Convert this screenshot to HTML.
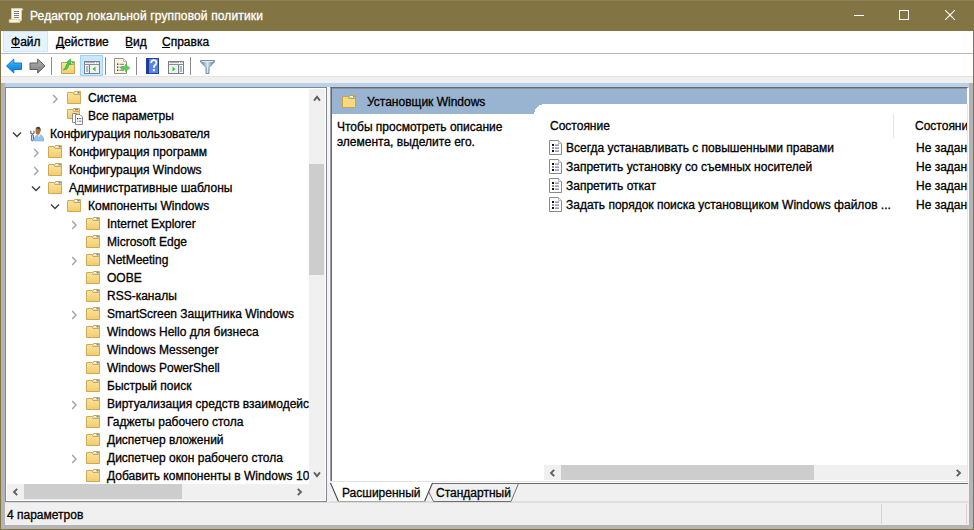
<!DOCTYPE html>
<html><head><meta charset="utf-8">
<style>
*{margin:0;padding:0;box-sizing:border-box}
html,body{width:974px;height:530px;overflow:hidden;background:#b4b4b4}
body{position:relative;font-family:"Liberation Sans",sans-serif;font-size:12px;color:#000}
.a{position:absolute;display:block}
.t{position:absolute;white-space:nowrap;line-height:14px;-webkit-text-stroke-width:0.3px}
u{text-decoration:none}
.clip{position:absolute;overflow:hidden}
</style></head><body>
<svg width="0" height="0" style="position:absolute"><defs><linearGradient id="fg" x1="0" y1="0" x2="0" y2="1"><stop offset="0" stop-color="#fbe4a0"/><stop offset="1" stop-color="#f2cc6c"/></linearGradient></defs></svg>
<!-- window frame -->
<div class="a" style="left:0;top:0;width:974px;height:530px;background:#837444"></div>
<div class="a" style="left:1px;top:31px;width:972px;height:498px;background:#b4b4b4"></div>
<!-- title bar -->
<div class="a" style="left:0;top:0;width:974px;height:1px;background:#8f8157"></div>
<svg class="a" style="left:8px;top:7px" width="16" height="17" viewBox="0 0 16 17"><path d="M3.5 1.5 H14 L15 2.5 L13.5 3.5 V13.5 H3.5 Z" fill="#fbf6df" stroke="#d8d2b8" stroke-width="0.8"/><rect x="6" y="4" width="5" height="1" fill="#7b7b9a"/><rect x="6" y="6" width="5" height="1" fill="#7b7b9a"/><rect x="6" y="8" width="5" height="1" fill="#7b7b9a"/><rect x="6" y="10" width="5" height="1" fill="#7b7b9a"/><path d="M1.5 12.5 H12 V15.5 H1.5 Q0.5 14 1.5 12.5Z" fill="#f6eab8" stroke="#d8cfa6" stroke-width="0.8"/><rect x="2" y="13.5" width="8" height="1" fill="#fff"/></svg>
<div class="t" style="left:30px;top:9px;color:#fff;font-size:12px;letter-spacing:0.14px">Редактор локальной групповой политики</div>
<div class="a" style="left:854px;top:15px;width:10px;height:1px;background:#fff"></div>
<div class="a" style="left:899px;top:10px;width:10px;height:10px;border:1px solid #fff"></div>
<svg class="a" style="left:945px;top:10px" width="10" height="10" viewBox="0 0 10 10"><path d="M0 0 L10 10 M10 0 L0 10" stroke="#fff" stroke-width="1.1"/></svg>
<!-- menu bar -->
<div class="a" style="left:1px;top:31px;width:972px;height:22px;background:#fff"></div>
<div class="a" style="left:1px;top:53px;width:972px;height:1px;background:#b9b9b9"></div>
<div class="a" style="left:3px;top:31px;width:45px;height:21px;background:#e5f3ff;border:1px solid #cce8ff"></div>
<div class="t" style="left:11px;top:35px"><u>Ф</u>айл</div>
<div class="t" style="left:56px;top:35px"><u>Д</u>ействие</div>
<div class="t" style="left:125px;top:35px"><u>В</u>ид</div>
<div class="t" style="left:162px;top:35px"><u>С</u>правка</div>
<div class="a" style="left:11px;top:47px;width:9px;height:1px;background:#000"></div>
<div class="a" style="left:56px;top:47px;width:9px;height:1px;background:#000"></div>
<div class="a" style="left:126px;top:47px;width:7px;height:1px;background:#000"></div>
<div class="a" style="left:162px;top:47px;width:8px;height:1px;background:#000"></div>
<!-- toolbar -->
<div class="a" style="left:1px;top:54px;width:972px;height:22px;background:#fff"></div>
<div class="a" style="left:1px;top:76px;width:972px;height:1px;background:#e3e3e3"></div>
<div class="a" style="left:1px;top:77px;width:972px;height:6px;background:#f0f0f0"></div>
<div class="a" style="left:80px;top:55px;width:23px;height:21px;background:#cce8ff;border:1px solid #99d1ff"></div>
<!-- back -->
<svg class="a" style="left:6px;top:58px" width="17" height="16" viewBox="0 0 17 16"><defs><linearGradient id="gb" x1="0" y1="0" x2="0" y2="1"><stop offset="0" stop-color="#5cc8ff"/><stop offset="0.5" stop-color="#1a9be8"/><stop offset="1" stop-color="#0a6fd0"/></linearGradient></defs><path d="M0.5 8 L7.8 1 V5 H15.5 V11.5 H7.8 V15 Z" fill="url(#gb)" stroke="#1f72c6" stroke-width="1"/></svg>
<!-- forward -->
<svg class="a" style="left:29px;top:58px" width="17" height="16" viewBox="0 0 17 16"><defs><linearGradient id="gg" x1="0" y1="0" x2="0" y2="1"><stop offset="0" stop-color="#b5b5b5"/><stop offset="1" stop-color="#7c7c7c"/></linearGradient></defs><path d="M16 8 L8.7 1 V5 H1 V11.5 H8.7 V15 Z" fill="url(#gg)" stroke="#5e5e5e" stroke-width="1"/></svg>
<div class="a" style="left:51px;top:57px;width:1px;height:18px;background:#8c8c8c"></div>
<!-- folder up -->
<svg class="a" style="left:61px;top:58px" width="16" height="17" viewBox="0 0 16 17"><path d="M7 5.5 L8 3.5 H13.5 V6.5" fill="#f5d784" stroke="#d0a853"/><rect x="9" y="4" width="2.5" height="1.2" fill="#fff"/><rect x="11" y="4" width="2" height="1.2" fill="#3b8de0"/><path d="M0.5 15.5 V5 Q0.5 4.5 1 4.5 H6 L7 6.5 H13.5 V15.5 Z" fill="url(#fg)" stroke="#c9a24c"/><path d="M2.3 11.8 Q4.5 10.5 5 8 Q5.3 6 6.6 5.4 L5.3 4.4 L9.6 1 L10 6.6 L8.6 5.9 Q7.6 6.6 7.3 8.8 Q6.6 12 2.3 11.8Z" fill="#45d045" stroke="#2aa52a" stroke-width="0.6"/></svg>
<!-- show/hide tree -->
<svg class="a" style="left:84px;top:61px" width="16" height="13" viewBox="0 0 16 13"><rect x="0.5" y="0.5" width="15" height="12" fill="#fff" stroke="#7a7f87"/><rect x="1.5" y="1.2" width="9.5" height="1" fill="#9a9ea5"/><rect x="12" y="1.2" width="1" height="1" fill="#9a9ea5"/><rect x="13.6" y="1.2" width="1" height="1" fill="#9a9ea5"/><rect x="1" y="3" width="14" height="1" fill="#8a8f96"/><rect x="4.8" y="4" width="1.2" height="8.5" fill="#7a7f87"/><rect x="6" y="4" width="9" height="8" fill="#f1f1f1"/><rect x="2" y="5.5" width="2" height="1" fill="#3a78c8"/><rect x="2" y="7.5" width="2" height="1" fill="#3a78c8"/><rect x="2" y="9.5" width="2" height="1" fill="#3a78c8"/><path d="M8.5 8 L11.5 5.5 V10.5 Z" fill="#3cc23c"/></svg>
<div class="a" style="left:105px;top:57px;width:1px;height:18px;background:#8c8c8c"></div>
<!-- export list -->
<svg class="a" style="left:114px;top:58px" width="17" height="16" viewBox="0 0 17 16"><path d="M0.5 0.5 H9.5 L12.5 3.5 V15.5 H0.5 Z" fill="#fbf5dc" stroke="#8f8f8f"/><path d="M9.5 0.5 V3.5 H12.5" fill="#fff" stroke="#aaa" stroke-width="0.8"/><rect x="3" y="5.5" width="1.3" height="1.3" fill="#222"/><rect x="5.5" y="5.8" width="4.5" height="0.9" fill="#6a6aa0"/><rect x="3" y="8.5" width="1.3" height="1.3" fill="#222"/><rect x="5.5" y="8.8" width="4.5" height="0.9" fill="#6a6aa0"/><rect x="3" y="11.5" width="1.3" height="1.3" fill="#222"/><rect x="5.5" y="11.8" width="4.5" height="0.9" fill="#6a6aa0"/><path d="M7.3 8.7 H11.3 V6.4 L15.8 10 L11.3 13.6 V11.3 H7.3 Z" fill="#52d452" stroke="#33b033" stroke-width="0.6"/></svg>
<div class="a" style="left:136px;top:57px;width:1px;height:18px;background:#8c8c8c"></div>
<!-- help -->
<svg class="a" style="left:146px;top:58px" width="13" height="16" viewBox="0 0 13 16"><rect x="0" y="0" width="13" height="16" fill="#2343a8"/><rect x="3" y="1" width="9" height="14" fill="#5d84dd"/><rect x="0.5" y="0.5" width="2.5" height="15" fill="#1c3a98"/><path d="M5.2 5 Q5.2 2.2 7.8 2.2 Q10.4 2.2 10.4 4.8 Q10.4 6.3 8.9 7.3 Q7.9 8 7.9 9.8" fill="none" stroke="#fff" stroke-width="1.7"/><rect x="6.9" y="11.2" width="2" height="2" fill="#fff"/></svg>
<!-- show/hide action -->
<svg class="a" style="left:168px;top:61px" width="16" height="13" viewBox="0 0 16 13"><rect x="0.5" y="0.5" width="15" height="12" fill="#fff" stroke="#7a7f87"/><rect x="1.5" y="1.2" width="9.5" height="1" fill="#9a9ea5"/><rect x="12" y="1.2" width="1" height="1" fill="#9a9ea5"/><rect x="13.6" y="1.2" width="1" height="1" fill="#9a9ea5"/><rect x="1" y="3" width="14" height="1" fill="#8a8f96"/><rect x="10" y="4" width="1.2" height="8.5" fill="#7a7f87"/><rect x="1" y="4" width="9" height="8" fill="#f1f1f1"/><rect x="12" y="5.5" width="2" height="1" fill="#3a78c8"/><rect x="12" y="7.5" width="2" height="1" fill="#3a78c8"/><rect x="12" y="9.5" width="2" height="1" fill="#3a78c8"/><path d="M7.5 8 L4.5 5.5 V10.5 Z" fill="#3cc23c"/></svg>
<div class="a" style="left:190px;top:57px;width:1px;height:18px;background:#8c8c8c"></div>
<!-- filter -->
<svg class="a" style="left:200px;top:60px" width="15" height="14" viewBox="0 0 15 14"><defs><linearGradient id="gf" x1="0" y1="0" x2="1" y2="0"><stop offset="0" stop-color="#5e7a90"/><stop offset="0.5" stop-color="#d6e6f2"/><stop offset="1" stop-color="#5a6f80"/></linearGradient></defs><path d="M0.5 0.5 H14.5 V1.8 L9 7.5 V13.5 H6 V7.5 L0.5 1.8 Z" fill="url(#gf)" stroke="#6c8294" stroke-width="0.9"/><rect x="1.5" y="1" width="12" height="0.9" fill="#e8f2fa"/></svg>
<!-- light blue strip -->
<div class="a" style="left:5px;top:83px;width:964px;height:4px;background:#b9d1ea"></div>
<!-- tree panel -->
<div class="a" style="left:5px;top:87px;width:322px;height:415px;background:#fff;border:1px solid #828790"></div>
<div class="clip" style="left:7px;top:89px;width:302px;height:395px">
<div class="a" style="left:-7px;top:-89px;width:974px;height:530px">
<svg class="a" style="left:52px;top:94px" width="7" height="10" viewBox="0 0 7 10"><path d="M1.2 1 L5 5 L1.2 9" fill="none" stroke="#a6a6a6" stroke-width="1.5"/></svg>
<svg class="a" style="left:67px;top:89px" width="16" height="16" viewBox="0 0 16 16"><path d="M6.5 4.5 L7.5 2.5 H13.5 V5.5" fill="#f5d784" stroke="#d0a853"/><rect x="8" y="3" width="3.5" height="1.3" fill="#fff"/><rect x="10.5" y="3" width="2" height="1.3" fill="#3b8de0"/><path d="M0.5 14.5 V4 Q0.5 3.5 1 3.5 H6 L7 5.5 H13.5 V14.5 Z" fill="url(#fg)" stroke="#d0a853"/></svg>
<div class="t" style="left:88px;top:91px">Система</div>
<svg class="a" style="left:67px;top:108px" width="17" height="17" viewBox="0 0 17 17"><path d="M5.5 2.5 L6.5 0.5 H12.5 V3.5" fill="#f5d784" stroke="#d0a853"/><rect x="8" y="1" width="3" height="1.2" fill="#3b8de0"/><path d="M0.5 10.5 V2 Q0.5 1.5 1 1.5 H5.5 L6.5 3.5 H12.5 V10.5 Z" fill="url(#fg)" stroke="#d0a853"/><path d="M5.5 5.5 H10 L11.5 7 V14.5 H5.5 Z" fill="#fff" stroke="#8c8c8c"/><path d="M8.5 6.5 H13 L15.5 9 V16.5 H8.5 Z" fill="#fff" stroke="#8c8c8c"/><rect x="10" y="10" width="1.3" height="1.3" fill="#222"/><rect x="12" y="10.2" width="2.5" height="0.9" fill="#5a5a8a"/><rect x="10" y="12.7" width="1.3" height="1" fill="#7a7aa0"/><rect x="12" y="12.7" width="2.5" height="0.9" fill="#5a5a8a"/></svg>
<div class="t" style="left:88px;top:109px">Все параметры</div>
<svg class="a" style="left:12px;top:131px" width="10" height="7" viewBox="0 0 10 7"><path d="M1 1.5 L5 5.5 L9 1.5" fill="none" stroke="#404040" stroke-width="1.5"/></svg>
<svg class="a" style="left:29px;top:126px" width="16" height="16" viewBox="0 0 16 16"><path d="M5.2 15 Q4.8 10.3 8 8.8 L9.8 10 L11.8 8.8 Q15 10.3 14.8 15 Z" fill="#94c4ee" stroke="#79a9d6" stroke-width="0.6"/><path d="M8.6 9.5 L9.8 11 L11 9.5Z" fill="#fff"/><ellipse cx="8.9" cy="5" rx="2.4" ry="3.7" fill="#b36d34"/><path d="M6.6 3.2 Q7.3 0.6 9.6 0.8 Q12.2 1.2 11.6 5.8 Q11.2 3 9.2 2.6 Q7.6 2.5 6.6 3.2Z" fill="#3a3a3a"/><path d="M1.8 4.8 V7 L3.4 8.3 L5 7 V4.8" fill="none" stroke="#6d6d6d" stroke-width="1.2"/><rect x="2.4" y="8.8" width="2" height="6" rx="1" fill="#cfe4f6" stroke="#2a57b0" stroke-width="0.9"/></svg>
<div class="t" style="left:50px;top:127px">Конфигурация пользователя</div>
<svg class="a" style="left:33px;top:148px" width="7" height="10" viewBox="0 0 7 10"><path d="M1.2 1 L5 5 L1.2 9" fill="none" stroke="#a6a6a6" stroke-width="1.5"/></svg>
<svg class="a" style="left:48px;top:143px" width="16" height="16" viewBox="0 0 16 16"><path d="M6.5 4.5 L7.5 2.5 H13.5 V5.5" fill="#f5d784" stroke="#d0a853"/><rect x="8" y="3" width="3.5" height="1.3" fill="#fff"/><rect x="10.5" y="3" width="2" height="1.3" fill="#3b8de0"/><path d="M0.5 14.5 V4 Q0.5 3.5 1 3.5 H6 L7 5.5 H13.5 V14.5 Z" fill="url(#fg)" stroke="#d0a853"/></svg>
<div class="t" style="left:69px;top:145px">Конфигурация программ</div>
<svg class="a" style="left:33px;top:166px" width="7" height="10" viewBox="0 0 7 10"><path d="M1.2 1 L5 5 L1.2 9" fill="none" stroke="#a6a6a6" stroke-width="1.5"/></svg>
<svg class="a" style="left:48px;top:161px" width="16" height="16" viewBox="0 0 16 16"><path d="M6.5 4.5 L7.5 2.5 H13.5 V5.5" fill="#f5d784" stroke="#d0a853"/><rect x="8" y="3" width="3.5" height="1.3" fill="#fff"/><rect x="10.5" y="3" width="2" height="1.3" fill="#3b8de0"/><path d="M0.5 14.5 V4 Q0.5 3.5 1 3.5 H6 L7 5.5 H13.5 V14.5 Z" fill="url(#fg)" stroke="#d0a853"/></svg>
<div class="t" style="left:69px;top:163px">Конфигурация Windows</div>
<svg class="a" style="left:31px;top:185px" width="10" height="7" viewBox="0 0 10 7"><path d="M1 1.5 L5 5.5 L9 1.5" fill="none" stroke="#404040" stroke-width="1.5"/></svg>
<svg class="a" style="left:48px;top:179px" width="16" height="16" viewBox="0 0 16 16"><path d="M6.5 4.5 L7.5 2.5 H13.5 V5.5" fill="#f5d784" stroke="#d0a853"/><rect x="8" y="3" width="3.5" height="1.3" fill="#fff"/><rect x="10.5" y="3" width="2" height="1.3" fill="#3b8de0"/><path d="M0.5 14.5 V4 Q0.5 3.5 1 3.5 H6 L7 5.5 H13.5 V14.5 Z" fill="url(#fg)" stroke="#d0a853"/></svg>
<div class="t" style="left:69px;top:181px">Административные шаблоны</div>
<svg class="a" style="left:50px;top:203px" width="10" height="7" viewBox="0 0 10 7"><path d="M1 1.5 L5 5.5 L9 1.5" fill="none" stroke="#404040" stroke-width="1.5"/></svg>
<svg class="a" style="left:67px;top:197px" width="16" height="16" viewBox="0 0 16 16"><path d="M6.5 4.5 L7.5 2.5 H13.5 V5.5" fill="#f5d784" stroke="#d0a853"/><rect x="8" y="3" width="3.5" height="1.3" fill="#fff"/><rect x="10.5" y="3" width="2" height="1.3" fill="#3b8de0"/><path d="M0.5 14.5 V4 Q0.5 3.5 1 3.5 H6 L7 5.5 H13.5 V14.5 Z" fill="url(#fg)" stroke="#d0a853"/></svg>
<div class="t" style="left:88px;top:199px">Компоненты Windows</div>
<svg class="a" style="left:71px;top:220px" width="7" height="10" viewBox="0 0 7 10"><path d="M1.2 1 L5 5 L1.2 9" fill="none" stroke="#a6a6a6" stroke-width="1.5"/></svg>
<svg class="a" style="left:86px;top:215px" width="16" height="16" viewBox="0 0 16 16"><path d="M6.5 4.5 L7.5 2.5 H13.5 V5.5" fill="#f5d784" stroke="#d0a853"/><rect x="8" y="3" width="3.5" height="1.3" fill="#fff"/><rect x="10.5" y="3" width="2" height="1.3" fill="#3b8de0"/><path d="M0.5 14.5 V4 Q0.5 3.5 1 3.5 H6 L7 5.5 H13.5 V14.5 Z" fill="url(#fg)" stroke="#d0a853"/></svg>
<div class="t" style="left:107px;top:217px">Internet Explorer</div>
<svg class="a" style="left:86px;top:233px" width="16" height="16" viewBox="0 0 16 16"><path d="M6.5 4.5 L7.5 2.5 H13.5 V5.5" fill="#f5d784" stroke="#d0a853"/><rect x="8" y="3" width="3.5" height="1.3" fill="#fff"/><rect x="10.5" y="3" width="2" height="1.3" fill="#3b8de0"/><path d="M0.5 14.5 V4 Q0.5 3.5 1 3.5 H6 L7 5.5 H13.5 V14.5 Z" fill="url(#fg)" stroke="#d0a853"/></svg>
<div class="t" style="left:107px;top:235px">Microsoft Edge</div>
<svg class="a" style="left:71px;top:256px" width="7" height="10" viewBox="0 0 7 10"><path d="M1.2 1 L5 5 L1.2 9" fill="none" stroke="#a6a6a6" stroke-width="1.5"/></svg>
<svg class="a" style="left:86px;top:251px" width="16" height="16" viewBox="0 0 16 16"><path d="M6.5 4.5 L7.5 2.5 H13.5 V5.5" fill="#f5d784" stroke="#d0a853"/><rect x="8" y="3" width="3.5" height="1.3" fill="#fff"/><rect x="10.5" y="3" width="2" height="1.3" fill="#3b8de0"/><path d="M0.5 14.5 V4 Q0.5 3.5 1 3.5 H6 L7 5.5 H13.5 V14.5 Z" fill="url(#fg)" stroke="#d0a853"/></svg>
<div class="t" style="left:107px;top:253px">NetMeeting</div>
<svg class="a" style="left:86px;top:269px" width="16" height="16" viewBox="0 0 16 16"><path d="M6.5 4.5 L7.5 2.5 H13.5 V5.5" fill="#f5d784" stroke="#d0a853"/><rect x="8" y="3" width="3.5" height="1.3" fill="#fff"/><rect x="10.5" y="3" width="2" height="1.3" fill="#3b8de0"/><path d="M0.5 14.5 V4 Q0.5 3.5 1 3.5 H6 L7 5.5 H13.5 V14.5 Z" fill="url(#fg)" stroke="#d0a853"/></svg>
<div class="t" style="left:107px;top:271px">OOBE</div>
<svg class="a" style="left:86px;top:287px" width="16" height="16" viewBox="0 0 16 16"><path d="M6.5 4.5 L7.5 2.5 H13.5 V5.5" fill="#f5d784" stroke="#d0a853"/><rect x="8" y="3" width="3.5" height="1.3" fill="#fff"/><rect x="10.5" y="3" width="2" height="1.3" fill="#3b8de0"/><path d="M0.5 14.5 V4 Q0.5 3.5 1 3.5 H6 L7 5.5 H13.5 V14.5 Z" fill="url(#fg)" stroke="#d0a853"/></svg>
<div class="t" style="left:107px;top:289px">RSS-каналы</div>
<svg class="a" style="left:71px;top:310px" width="7" height="10" viewBox="0 0 7 10"><path d="M1.2 1 L5 5 L1.2 9" fill="none" stroke="#a6a6a6" stroke-width="1.5"/></svg>
<svg class="a" style="left:86px;top:305px" width="16" height="16" viewBox="0 0 16 16"><path d="M6.5 4.5 L7.5 2.5 H13.5 V5.5" fill="#f5d784" stroke="#d0a853"/><rect x="8" y="3" width="3.5" height="1.3" fill="#fff"/><rect x="10.5" y="3" width="2" height="1.3" fill="#3b8de0"/><path d="M0.5 14.5 V4 Q0.5 3.5 1 3.5 H6 L7 5.5 H13.5 V14.5 Z" fill="url(#fg)" stroke="#d0a853"/></svg>
<div class="t" style="left:107px;top:307px">SmartScreen Защитника Windows</div>
<svg class="a" style="left:86px;top:323px" width="16" height="16" viewBox="0 0 16 16"><path d="M6.5 4.5 L7.5 2.5 H13.5 V5.5" fill="#f5d784" stroke="#d0a853"/><rect x="8" y="3" width="3.5" height="1.3" fill="#fff"/><rect x="10.5" y="3" width="2" height="1.3" fill="#3b8de0"/><path d="M0.5 14.5 V4 Q0.5 3.5 1 3.5 H6 L7 5.5 H13.5 V14.5 Z" fill="url(#fg)" stroke="#d0a853"/></svg>
<div class="t" style="left:107px;top:325px">Windows Hello для бизнеса</div>
<svg class="a" style="left:86px;top:341px" width="16" height="16" viewBox="0 0 16 16"><path d="M6.5 4.5 L7.5 2.5 H13.5 V5.5" fill="#f5d784" stroke="#d0a853"/><rect x="8" y="3" width="3.5" height="1.3" fill="#fff"/><rect x="10.5" y="3" width="2" height="1.3" fill="#3b8de0"/><path d="M0.5 14.5 V4 Q0.5 3.5 1 3.5 H6 L7 5.5 H13.5 V14.5 Z" fill="url(#fg)" stroke="#d0a853"/></svg>
<div class="t" style="left:107px;top:343px">Windows Messenger</div>
<svg class="a" style="left:86px;top:359px" width="16" height="16" viewBox="0 0 16 16"><path d="M6.5 4.5 L7.5 2.5 H13.5 V5.5" fill="#f5d784" stroke="#d0a853"/><rect x="8" y="3" width="3.5" height="1.3" fill="#fff"/><rect x="10.5" y="3" width="2" height="1.3" fill="#3b8de0"/><path d="M0.5 14.5 V4 Q0.5 3.5 1 3.5 H6 L7 5.5 H13.5 V14.5 Z" fill="url(#fg)" stroke="#d0a853"/></svg>
<div class="t" style="left:107px;top:361px">Windows PowerShell</div>
<svg class="a" style="left:86px;top:377px" width="16" height="16" viewBox="0 0 16 16"><path d="M6.5 4.5 L7.5 2.5 H13.5 V5.5" fill="#f5d784" stroke="#d0a853"/><rect x="8" y="3" width="3.5" height="1.3" fill="#fff"/><rect x="10.5" y="3" width="2" height="1.3" fill="#3b8de0"/><path d="M0.5 14.5 V4 Q0.5 3.5 1 3.5 H6 L7 5.5 H13.5 V14.5 Z" fill="url(#fg)" stroke="#d0a853"/></svg>
<div class="t" style="left:107px;top:379px">Быстрый поиск</div>
<svg class="a" style="left:71px;top:400px" width="7" height="10" viewBox="0 0 7 10"><path d="M1.2 1 L5 5 L1.2 9" fill="none" stroke="#a6a6a6" stroke-width="1.5"/></svg>
<svg class="a" style="left:86px;top:395px" width="16" height="16" viewBox="0 0 16 16"><path d="M6.5 4.5 L7.5 2.5 H13.5 V5.5" fill="#f5d784" stroke="#d0a853"/><rect x="8" y="3" width="3.5" height="1.3" fill="#fff"/><rect x="10.5" y="3" width="2" height="1.3" fill="#3b8de0"/><path d="M0.5 14.5 V4 Q0.5 3.5 1 3.5 H6 L7 5.5 H13.5 V14.5 Z" fill="url(#fg)" stroke="#d0a853"/></svg>
<div class="t" style="left:107px;top:397px">Виртуализация средств взаимодействия с приложениями</div>
<svg class="a" style="left:86px;top:413px" width="16" height="16" viewBox="0 0 16 16"><path d="M6.5 4.5 L7.5 2.5 H13.5 V5.5" fill="#f5d784" stroke="#d0a853"/><rect x="8" y="3" width="3.5" height="1.3" fill="#fff"/><rect x="10.5" y="3" width="2" height="1.3" fill="#3b8de0"/><path d="M0.5 14.5 V4 Q0.5 3.5 1 3.5 H6 L7 5.5 H13.5 V14.5 Z" fill="url(#fg)" stroke="#d0a853"/></svg>
<div class="t" style="left:107px;top:415px">Гаджеты рабочего стола</div>
<svg class="a" style="left:86px;top:431px" width="16" height="16" viewBox="0 0 16 16"><path d="M6.5 4.5 L7.5 2.5 H13.5 V5.5" fill="#f5d784" stroke="#d0a853"/><rect x="8" y="3" width="3.5" height="1.3" fill="#fff"/><rect x="10.5" y="3" width="2" height="1.3" fill="#3b8de0"/><path d="M0.5 14.5 V4 Q0.5 3.5 1 3.5 H6 L7 5.5 H13.5 V14.5 Z" fill="url(#fg)" stroke="#d0a853"/></svg>
<div class="t" style="left:107px;top:433px">Диспетчер вложений</div>
<svg class="a" style="left:71px;top:454px" width="7" height="10" viewBox="0 0 7 10"><path d="M1.2 1 L5 5 L1.2 9" fill="none" stroke="#a6a6a6" stroke-width="1.5"/></svg>
<svg class="a" style="left:86px;top:449px" width="16" height="16" viewBox="0 0 16 16"><path d="M6.5 4.5 L7.5 2.5 H13.5 V5.5" fill="#f5d784" stroke="#d0a853"/><rect x="8" y="3" width="3.5" height="1.3" fill="#fff"/><rect x="10.5" y="3" width="2" height="1.3" fill="#3b8de0"/><path d="M0.5 14.5 V4 Q0.5 3.5 1 3.5 H6 L7 5.5 H13.5 V14.5 Z" fill="url(#fg)" stroke="#d0a853"/></svg>
<div class="t" style="left:107px;top:451px">Диспетчер окон рабочего стола</div>
<svg class="a" style="left:86px;top:467px" width="16" height="16" viewBox="0 0 16 16"><path d="M6.5 4.5 L7.5 2.5 H13.5 V5.5" fill="#f5d784" stroke="#d0a853"/><rect x="8" y="3" width="3.5" height="1.3" fill="#fff"/><rect x="10.5" y="3" width="2" height="1.3" fill="#3b8de0"/><path d="M0.5 14.5 V4 Q0.5 3.5 1 3.5 H6 L7 5.5 H13.5 V14.5 Z" fill="url(#fg)" stroke="#d0a853"/></svg>
<div class="t" style="left:107px;top:469px">Добавить компоненты в Windows 10</div>
</div></div>
<!-- tree vscroll -->
<div class="a" style="left:309px;top:89px;width:16px;height:395px;background:#f0f0f0"></div>
<div class="a" style="left:309px;top:164px;width:15px;height:111px;background:#cdcdcd"></div>
<svg class="a" style="left:313px;top:95px" width="8" height="7" viewBox="0 0 8 7"><path d="M1 5.6 L4 1.8 L7 5.6" fill="none" stroke="#606060" stroke-width="1.9"/></svg>
<svg class="a" style="left:313px;top:471px" width="8" height="7" viewBox="0 0 8 7"><path d="M1 1.4 L4 5.2 L7 1.4" fill="none" stroke="#606060" stroke-width="1.9"/></svg>
<!-- tree hscroll -->
<div class="a" style="left:7px;top:484px;width:318px;height:16px;background:#f0f0f0"></div>
<div class="a" style="left:24px;top:484px;width:158px;height:15px;background:#cdcdcd"></div>
<svg class="a" style="left:12px;top:488px" width="6" height="8" viewBox="0 0 6 8"><path d="M5.2 0.8 L2 4 L5.2 7.2" fill="none" stroke="#606060" stroke-width="1.9"/></svg>
<svg class="a" style="left:297px;top:488px" width="6" height="8" viewBox="0 0 6 8"><path d="M0.8 0.8 L4 4 L0.8 7.2" fill="none" stroke="#606060" stroke-width="1.9"/></svg>
<!-- splitter -->
<div class="a" style="left:327px;top:87px;width:3px;height:415px;background:#f5f5f5"></div>
<!-- detail panel -->
<div class="a" style="left:330px;top:87px;width:639px;height:394px;background:#fff;border-left:1px solid #a0a0a0;border-top:1px solid #696969;border-right:2px solid #fff"></div>
<div class="a" style="left:331px;top:87px;width:1px;height:394px;background:#696969"></div>
<div class="a" style="left:332px;top:88px;width:635px;height:16px;background:#99b4d1"></div>
<div class="a" style="left:332px;top:88px;width:635px;height:1px;background:#8a929c"></div>
<div class="a" style="left:332px;top:104px;width:210px;height:10px;background:#99b4d1"></div>
<svg class="a" style="left:534px;top:104px" width="16" height="10" viewBox="0 0 16 10" shape-rendering="crispEdges"><path d="M0 10 V8 H1 V5 L5 1 H8 V0 H16 V10 Z" fill="#fff"/></svg>
<svg class="a" style="left:342px;top:93px" width="16" height="16" viewBox="0 0 16 16"><path d="M6.5 4.5 L7.5 2.5 H13.5 V5.5" fill="#f2cf73" stroke="#c9a24c"/><rect x="8" y="3" width="4" height="1.3" fill="#fff"/><rect x="11" y="3" width="1.5" height="1.3" fill="#3b8de0"/><path d="M0.5 14.5 V4 Q0.5 3.5 1 3.5 H6 L7 5.5 H13.5 V14.5 Z" fill="#f7d982" stroke="#c9a24c"/></svg>
<div class="t" style="left:367px;top:95px">Установщик Windows</div>
<div class="t" style="left:337px;top:120px;line-height:15px">Чтобы просмотреть описание<br>элемента, выделите его.</div>
<!-- list header -->
<div class="t" style="left:550px;top:119px">Состояние</div>
<div class="a" style="left:893px;top:114px;width:1px;height:24px;background:#e5e5e5"></div>
<div class="clip" style="left:900px;top:110px;width:67px;height:120px"><div class="t" style="left:15px;top:9px">Состояние</div></div>
<div class="clip" style="left:540px;top:130px;width:427px;height:100px"><div class="a" style="left:-540px;top:-130px;width:974px;height:530px">
<svg class="a" style="left:549px;top:140px" width="14" height="16" viewBox="0 0 14 16"><path d="M0.5 0.5 H9.5 L12.5 3.5 V14.5 H0.5 Z" fill="#fff" stroke="#8a8a8a"/><path d="M9.5 0.5 V3.5 H12.5" fill="#eee" stroke="#aaa" stroke-width="0.8"/><rect x="3" y="4" width="2" height="2" fill="#111"/><rect x="6" y="4.6" width="4" height="1" fill="#5b5b8c"/><rect x="3" y="7" width="2" height="2" fill="#8c8cb0"/><rect x="6" y="7.6" width="4" height="1" fill="#5b5b8c"/><rect x="3" y="10" width="2" height="2" fill="#111"/><rect x="6" y="10.6" width="4" height="1" fill="#5b5b8c"/></svg>
<div class="t" style="left:566px;top:141px">Всегда устанавливать с повышенными правами</div>
<div class="t" style="left:916px;top:141px">Не задана</div>
<svg class="a" style="left:549px;top:159px" width="14" height="16" viewBox="0 0 14 16"><path d="M0.5 0.5 H9.5 L12.5 3.5 V14.5 H0.5 Z" fill="#fff" stroke="#8a8a8a"/><path d="M9.5 0.5 V3.5 H12.5" fill="#eee" stroke="#aaa" stroke-width="0.8"/><rect x="3" y="4" width="2" height="2" fill="#111"/><rect x="6" y="4.6" width="4" height="1" fill="#5b5b8c"/><rect x="3" y="7" width="2" height="2" fill="#8c8cb0"/><rect x="6" y="7.6" width="4" height="1" fill="#5b5b8c"/><rect x="3" y="10" width="2" height="2" fill="#111"/><rect x="6" y="10.6" width="4" height="1" fill="#5b5b8c"/></svg>
<div class="t" style="left:566px;top:160px">Запретить установку со съемных носителей</div>
<div class="t" style="left:916px;top:160px">Не задана</div>
<svg class="a" style="left:549px;top:178px" width="14" height="16" viewBox="0 0 14 16"><path d="M0.5 0.5 H9.5 L12.5 3.5 V14.5 H0.5 Z" fill="#fff" stroke="#8a8a8a"/><path d="M9.5 0.5 V3.5 H12.5" fill="#eee" stroke="#aaa" stroke-width="0.8"/><rect x="3" y="4" width="2" height="2" fill="#111"/><rect x="6" y="4.6" width="4" height="1" fill="#5b5b8c"/><rect x="3" y="7" width="2" height="2" fill="#8c8cb0"/><rect x="6" y="7.6" width="4" height="1" fill="#5b5b8c"/><rect x="3" y="10" width="2" height="2" fill="#111"/><rect x="6" y="10.6" width="4" height="1" fill="#5b5b8c"/></svg>
<div class="t" style="left:566px;top:179px">Запретить откат</div>
<div class="t" style="left:916px;top:179px">Не задана</div>
<svg class="a" style="left:549px;top:197px" width="14" height="16" viewBox="0 0 14 16"><path d="M0.5 0.5 H9.5 L12.5 3.5 V14.5 H0.5 Z" fill="#fff" stroke="#8a8a8a"/><path d="M9.5 0.5 V3.5 H12.5" fill="#eee" stroke="#aaa" stroke-width="0.8"/><rect x="3" y="4" width="2" height="2" fill="#111"/><rect x="6" y="4.6" width="4" height="1" fill="#5b5b8c"/><rect x="3" y="7" width="2" height="2" fill="#8c8cb0"/><rect x="6" y="7.6" width="4" height="1" fill="#5b5b8c"/><rect x="3" y="10" width="2" height="2" fill="#111"/><rect x="6" y="10.6" width="4" height="1" fill="#5b5b8c"/></svg>
<div class="t" style="left:566px;top:198px">Задать порядок поиска установщиком Windows файлов ...</div>
<div class="t" style="left:916px;top:198px">Не задана</div>
</div></div>
<div class="a" style="left:967px;top:104px;width:1px;height:377px;background:#e6e6e6"></div>
<!-- list hscroll -->
<div class="a" style="left:544px;top:465px;width:423px;height:15px;background:#f0f0f0"></div>
<div class="a" style="left:561px;top:465px;width:253px;height:15px;background:#cdcdcd"></div>
<svg class="a" style="left:549px;top:469px" width="6" height="8" viewBox="0 0 6 8"><path d="M5.2 0.8 L2 4 L5.2 7.2" fill="none" stroke="#606060" stroke-width="1.9"/></svg>
<svg class="a" style="left:956px;top:469px" width="6" height="8" viewBox="0 0 6 8"><path d="M0.8 0.8 L4 4 L0.8 7.2" fill="none" stroke="#606060" stroke-width="1.9"/></svg>
<!-- tab area -->
<div class="a" style="left:327px;top:481px;width:642px;height:21px;background:#f0f0f0"></div>
<div class="a" style="left:332px;top:481px;width:636px;height:1px;background:#e3e3e3"></div>
<div class="a" style="left:332px;top:482px;width:636px;height:1px;background:#fff"></div>
<div class="a" style="left:432px;top:483px;width:536px;height:1px;background:#696969"></div>
<div class="a" style="left:330px;top:501px;width:638px;height:1px;background:#e0e0e0"></div>
<svg class="a" style="left:326px;top:480px" width="200" height="23" viewBox="0 0 200 23"><path d="M4 2.5 L12.5 21.5 H98.5 L106.5 2.5 Z" fill="#fff"/><path d="M106.5 3.5 H192.5 L185 21.5 H108 L102.5 12 Z" fill="#f0f0f0"/><path d="M106 3.5 H193 M192.5 3.5 L185 21.5 M185 21.5 H107.5 L102.5 11.5" fill="none" stroke="#6e6e6e" stroke-width="1"/><path d="M4.5 3 L12.5 21.5 M98.5 21.5 L106.5 3" fill="none" stroke="#4a4a4a" stroke-width="1.1"/><path d="M12 21.5 H98.5" stroke="#a8a8a8" stroke-width="1"/></svg>
<div class="t" style="left:342px;top:486px">Расширенный</div>
<div class="t" style="left:436px;top:486px">Стандартный</div>
<!-- status bar -->
<div class="a" style="left:5px;top:502px;width:964px;height:23px;background:#f0f0f0;border-top:1px solid #dcdcdc"></div>
<div class="a" style="left:966px;top:504px;width:1px;height:20px;background:#d7d7d7"></div>
<div class="a" style="left:881px;top:504px;width:1px;height:20px;background:#d7d7d7"></div>
<div class="t" style="left:7px;top:508px">4 параметров</div>
</body></html>
